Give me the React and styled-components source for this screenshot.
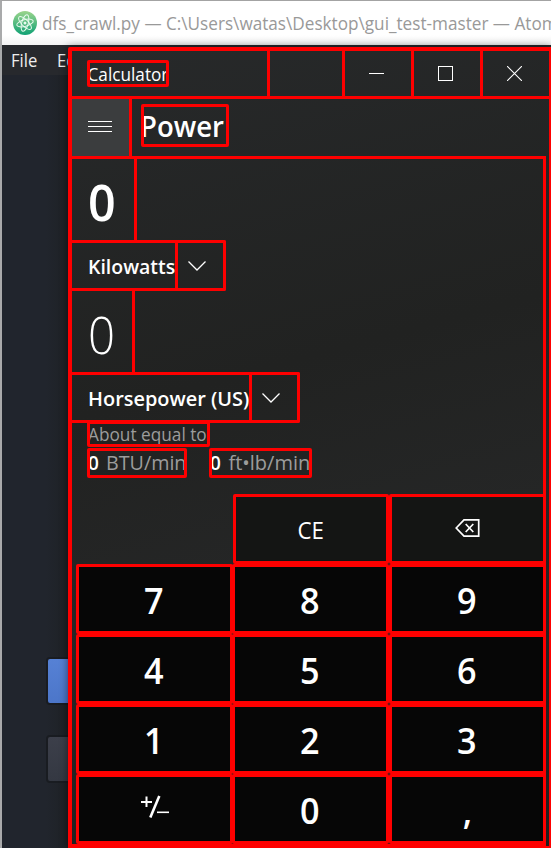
import React from 'react';
import styled, { createGlobalStyle } from 'styled-components';

const RED = '#fe0000';

const Global = createGlobalStyle`
  * { box-sizing: border-box; }
  body { margin: 0; background: #21252c; overflow: hidden; }
  svg { flex: none; display: block; }
`;

const Editor = styled.div`
  position: relative;
  width: 551px;
  height: 848px;
  overflow: hidden;
  border-left: 2px solid #a9aaab;
  border-top: 1px solid #a3a3a3;
  background: linear-gradient(90deg, #21252d 0 44px, #1e2125 66px);
  font-family: 'Open Sans', 'Noto Sans', sans-serif;
  color: #fff;
`;

const Text = styled.span`
  display: block;
  flex: none;
  white-space: pre;
  font-size: ${(p) => p.$size}px;
  font-weight: ${(p) => p.$weight || 400};
  line-height: ${(p) => p.$line || 24}px;
  color: ${(p) => p.$color || '#fff'};
  transform: translate(${(p) => p.$dx || 0}px, ${(p) => p.$dy || 0}px) scaleX(${(p) => p.$sx || 1});
  transform-origin: ${(p) => (p.$center ? 'center' : 'left')};
`;

const EditorTitle = styled.div`
  display: flex;
  align-items: center;
  gap: 5px;
  height: 44px;
  padding-left: 11px;
  background: linear-gradient(#fff 34px, #f3f3f3);
`;

const MenuBar = styled.div`
  display: flex;
  gap: 18px;
  height: 30px;
  padding: 3px 0 0 9px;
  background: #27292d;
`;

const Buttons = styled.div`
  display: flex;
  flex-direction: column;
  gap: 30px;
  margin: 582px 0 0 44px;
`;

const EditorButton = styled.div`
  width: 90px;
  height: 48px;
  border: 2px solid #191c21;
  border-radius: 4px;
  background: ${(p) => (p.$primary ? 'linear-gradient(#5681d5, #4c76c9)' : 'linear-gradient(#3c3f4a, #343842)')};
`;

const Calculator = styled.div`
  position: absolute;
  left: 66px;
  top: 46px;
  width: 483px;
  height: 801px;
  border: solid ${RED};
  border-width: 4px 2px 2px 4px;
  border-radius: 2px 0 0 0;
  background: linear-gradient(165deg, #27292a, #212221 40%, #252626 62%, #1e1f1e);
  box-shadow: 0 0 9px #0008;
`;

const TitleBar = styled.div`
  display: grid;
  grid-template-columns: 195px 75px 69px 69px 69px;
  height: 48px;
  border-bottom: 3px solid ${RED};
`;

const TitleCell = styled.div`
  display: flex;
  align-items: center;
  justify-content: center;
  padding-right: 3px;
  border-left: 3px solid ${RED};
`;

const Outline = styled.div`
  width: ${(p) => p.$w}px;
  height: ${(p) => p.$h}px;
  border: 3px solid ${RED};
  border-radius: 2px;
  display: flex;
  align-items: center;
  gap: ${(p) => p.$gap || 0}px;
  overflow: hidden;
`;

const TitleName = styled.div`
  padding: 9px 0 0 15px;
`;

const Header = styled.div`
  display: flex;
  width: 474px;
  height: 60px;
  border-bottom: 3px solid ${RED};
  border-radius: 0 2px 0 0;
`;

const MenuButton = styled.div`
  display: flex;
  align-items: center;
  justify-content: center;
  width: 60px;
  padding: 0 1px 2px 0;
  background: #3b3d3e;
  border-right: 3px solid ${RED};
`;

const Heading = styled.div`
  padding: 5px 0 0 9px;
`;

const Converter = styled.div`
  width: 474px;
  height: 688px;
  border: solid ${RED};
  border-width: 0 3px 3px 0;
`;

const Value = styled.div`
  display: flex;
  align-items: center;
  width: ${(p) => p.$w}px;
  height: 81px;
  padding-left: 16px;
  border-right: 3px solid ${RED};
`;

const UnitPicker = styled.div`
  display: flex;
  width: ${(p) => p.$w}px;
  height: 51px;
  border: solid ${RED};
  border-width: 3px 3px 3px 0;
  border-radius: 0 2px 2px 0;
`;

const UnitName = styled.div`
  display: flex;
  align-items: center;
  width: ${(p) => p.$w}px;
  padding-left: 16px;
  border-right: 3px solid ${RED};
`;

const UnitArrow = styled.div`
  display: flex;
  align-items: center;
  padding: 1px 0 0 9px;
`;

const Approximation = styled.div`
  margin: -2px 0 0 15px;
`;

const Results = styled.div`
  display: flex;
  gap: 22px;
  margin: 1px 0 0 15px;
`;

const Keypad = styled.div`
  display: grid;
  grid-template-columns: 156px 157px 157px;
  grid-auto-rows: 70px;
  margin: 16px 0 0 4px;
  width: 470px;
`;

const Key = styled.div`
  display: flex;
  align-items: center;
  justify-content: center;
  border: 3px solid ${RED};
  border-radius: 2px;
  margin-right: ${(p) => (p.$wide ? -1 : 0)}px;
  margin-left: ${(p) => (p.$inset ? 1 : 0)}px;
  padding-bottom: ${(p) => p.$lift || 0}px;
  background: ${(p) => (p.$light ? '#141514' : '#060606')};
`;

const AtomLogo = () => (
  <svg width="24" height="24" viewBox="0 0 24 24">
    <defs>
      <linearGradient id="atom" x1="0" y1="0" x2="0" y2="1">
        <stop offset="0" stopColor="#9bd58c" />
        <stop offset="1" stopColor="#0fa174" />
      </linearGradient>
    </defs>
    <circle cx="12" cy="12" r="12" fill="url(#atom)" />
    <g fill="none" stroke="#e9faef" strokeWidth="1">
      <ellipse cx="12" cy="12" rx="8.5" ry="3.3" transform="rotate(-15 12 12)" />
      <ellipse cx="12" cy="12" rx="8.5" ry="3.3" transform="rotate(45 12 12)" />
      <ellipse cx="12" cy="12" rx="8.5" ry="3.3" transform="rotate(105 12 12)" />
    </g>
    <circle cx="12" cy="12" r="1.5" fill="#e9faef" />
  </svg>
);

const Chevron = () => (
  <svg width="20" height="12" viewBox="0 0 20 12" fill="none" stroke="#fff" strokeWidth="1.3">
    <path d="M1.5 1.5 L10 10 L18.5 1.5" />
  </svg>
);

const Backspace = () => (
  <svg width="25" height="20" viewBox="0 0 25 20" fill="none" stroke="#fff" strokeWidth="1.7">
    <path d="M1.2 10 L9 1.8 H23.7 V18.2 H9 Z M10.7 6 L18.3 14 M18.3 6 L10.7 14" />
  </svg>
);

const PlusMinus = () => (
  <svg width="30" height="24" viewBox="0 0 30 24" fill="none" stroke="#fff" strokeWidth="2">
    <path d="M1 7 H12 M6.5 1.5 V12" />
    <path d="M19.3 1 L10.3 22.5" strokeWidth="2.6" />
    <path d="M17 17.3 H29" strokeWidth="1.6" />
  </svg>
);

const Unit = ({ name, nameWidth, width, sx }) => (
  <UnitPicker $w={width}>
    <UnitName $w={nameWidth}><Text $size={20.5} $weight={600} $sx={sx}>{name}</Text></UnitName>
    <UnitArrow><Chevron /></UnitArrow>
  </UnitPicker>
);

const digits = ['7', '8', '9', '4', '5', '6', '1', '2', '3', '±', '0', ','];

export default function App() {
  return (
    <>
      <Global />
      <Editor>
        <EditorTitle>
          <AtomLogo />
          <Text $size={18} $color="#999" $sx={0.953}>dfs_crawl.py — C:\Users\watas\Desktop\gui_test-master — Atom</Text>
        </EditorTitle>
        <MenuBar>
          <Text $size={17.5} $color="#eee" $sx={0.95}>File</Text>
          <Text $size={17.5} $color="#eee" $sx={0.95}>Edit</Text>
        </MenuBar>
        <Buttons>
          <EditorButton $primary />
          <EditorButton />
        </Buttons>
        <Calculator>
          <TitleBar>
            <TitleName>
              <Outline $w={82} $h={27}><Text $size={18} $sx={0.955} $dx={-2.5} $dy={-0.5}>Calculator</Text></Outline>
            </TitleName>
            <TitleCell />
            <TitleCell>
              <svg width="15" height="15"><path d="M0 7.5 H15" stroke="#fff" /></svg>
            </TitleCell>
            <TitleCell>
              <svg width="15" height="15"><rect x=".5" y=".5" width="14" height="14" fill="none" stroke="#fff" /></svg>
            </TitleCell>
            <TitleCell>
              <svg width="15" height="15"><path d="M0 0 L15 15 M15 0 L0 15" stroke="#fff" strokeWidth="1.1" /></svg>
            </TitleCell>
          </TitleBar>
          <Header>
            <MenuButton>
              <svg width="24" height="11"><path d="M0 .5 H24 M0 5.5 H24 M0 10.5 H24" stroke="#fff" /></svg>
            </MenuButton>
            <Heading>
              <Outline $w={88} $h={43}><Text $size={29} $weight={600} $sx={0.95} $line={36} $dx={-4}>Power</Text></Outline>
            </Heading>
          </Header>
          <Converter>
            <Value $w={65}><Text $size={51} $weight={600} $line={70} $sx={0.95} $dy={1}>0</Text></Value>
            <Unit name="Kilowatts" width={154} nameWidth={106} sx={0.95} />
            <Value $w={63}><Text $size={51} $weight={300} $line={70} $sx={0.93} $dy={2}>0</Text></Value>
            <Unit name="Horsepower (US)" width={228} nameWidth={180} sx={0.972} />
            <Approximation>
              <Outline $w={123} $h={26}>
                <Text $size={17.5} $color="#9c9c9c" $sx={0.985} $dx={-2} $dy={-0.5}>About equal to</Text>
              </Outline>
            </Approximation>
            <Results>
              <Outline $w={100} $h={30} $gap={6}>
                <Text $size={20} $weight={600} $sx={0.95} $dx={-2}>0</Text>
                <Text $size={20} $color="#9c9c9c" $sx={0.985} $dx={-1}>BTU/min</Text>
              </Outline>
              <Outline $w={103} $h={30} $gap={6}>
                <Text $size={20} $weight={600} $sx={0.95} $dx={-2}>0</Text>
                <Text $size={20} $color="#9c9c9c" $sx={1} $dx={-1}>ft•lb/min</Text>
              </Outline>
            </Results>
            <Keypad>
              <span />
              <Key $light $inset><Text $size={23} $sx={0.97} $center $dy={1}>CE</Text></Key>
              <Key $light $lift={2}><Backspace /></Key>
              {digits.map((d, i) => (
                <Key key={d} $wide={i % 3 === 0} $lift={d === '±' ? 4 : 0}>
                  {d === '±' ? <PlusMinus /> : (
                    <Text $size={36} $weight={600} $line={48} $sx={0.95} $center $dx={-0.5} $dy={2}>{d}</Text>
                  )}
                </Key>
              ))}
            </Keypad>
          </Converter>
        </Calculator>
      </Editor>
    </>
  );
}
